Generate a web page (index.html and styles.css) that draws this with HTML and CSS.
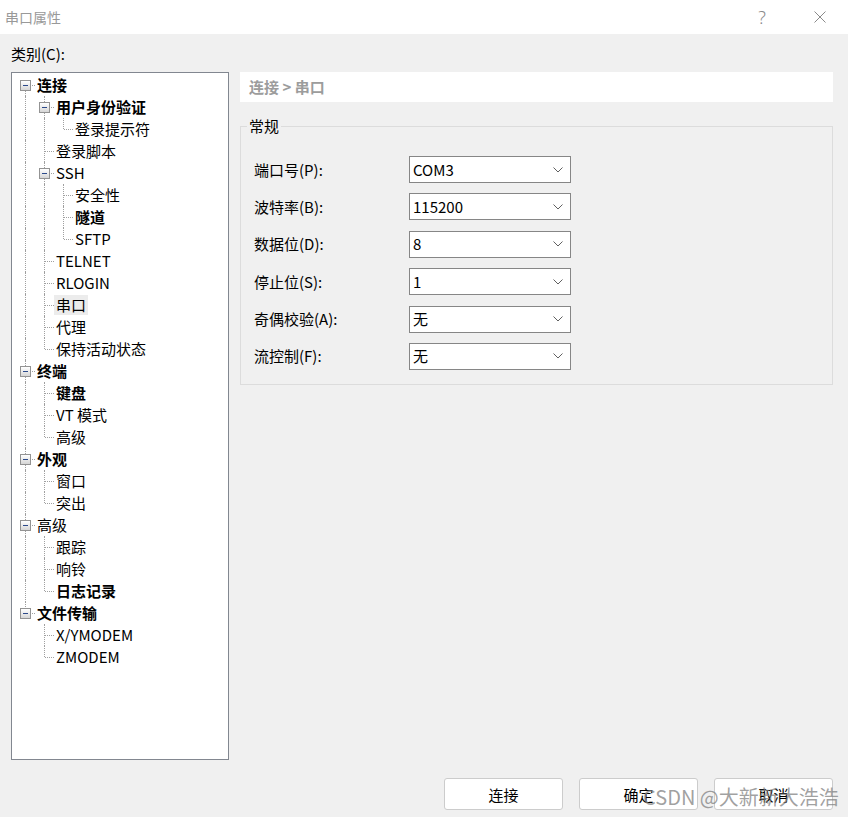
FILE: index.html
```html
<!DOCTYPE html>
<html lang="zh-CN">
<head>
<meta charset="utf-8">
<title>串口属性</title>
<link rel="stylesheet" href="styles.css">
</head>
<body>
<div class="titlebar">
  <span class="title">串口属性</span>
  <span class="tb-btn help">?</span>
  <span class="tb-btn close">
    <svg width="12" height="12" viewBox="0 0 12 12"><path d="M0.5 0.5 L11.5 11.5 M11.5 0.5 L0.5 11.5" stroke="#8a8a8a" stroke-width="1" fill="none"/></svg>
  </span>
</div>

<div class="main">
  <div class="cat-label">类别(C):</div>
  <div class="content">
    <div class="tree">
      <div class="row"><span class="g f"><i class="box"></i></span><span class="lbl b">连接</span></div>
      <div class="row"><span class="g v"></span><span class="g t"><i class="box"></i></span><span class="lbl b">用户身份验证</span></div>
      <div class="row"><span class="g v"></span><span class="g v"></span><span class="g l"></span><span class="lbl">登录提示符</span></div>
      <div class="row"><span class="g v"></span><span class="g t"></span><span class="lbl">登录脚本</span></div>
      <div class="row"><span class="g v"></span><span class="g t"><i class="box"></i></span><span class="lbl">SSH</span></div>
      <div class="row"><span class="g v"></span><span class="g v"></span><span class="g t"></span><span class="lbl">安全性</span></div>
      <div class="row"><span class="g v"></span><span class="g v"></span><span class="g t"></span><span class="lbl b">隧道</span></div>
      <div class="row"><span class="g v"></span><span class="g v"></span><span class="g l"></span><span class="lbl">SFTP</span></div>
      <div class="row"><span class="g v"></span><span class="g t"></span><span class="lbl">TELNET</span></div>
      <div class="row"><span class="g v"></span><span class="g t"></span><span class="lbl">RLOGIN</span></div>
      <div class="row"><span class="g v"></span><span class="g t"></span><span class="lbl sel">串口</span></div>
      <div class="row"><span class="g v"></span><span class="g t"></span><span class="lbl">代理</span></div>
      <div class="row"><span class="g v"></span><span class="g l"></span><span class="lbl">保持活动状态</span></div>
      <div class="row"><span class="g t"><i class="box"></i></span><span class="lbl b">终端</span></div>
      <div class="row"><span class="g v"></span><span class="g t"></span><span class="lbl b">键盘</span></div>
      <div class="row"><span class="g v"></span><span class="g t"></span><span class="lbl">VT 模式</span></div>
      <div class="row"><span class="g v"></span><span class="g l"></span><span class="lbl">高级</span></div>
      <div class="row"><span class="g t"><i class="box"></i></span><span class="lbl b">外观</span></div>
      <div class="row"><span class="g v"></span><span class="g t"></span><span class="lbl">窗口</span></div>
      <div class="row"><span class="g v"></span><span class="g l"></span><span class="lbl">突出</span></div>
      <div class="row"><span class="g t"><i class="box"></i></span><span class="lbl">高级</span></div>
      <div class="row"><span class="g v"></span><span class="g t"></span><span class="lbl">跟踪</span></div>
      <div class="row"><span class="g v"></span><span class="g t"></span><span class="lbl">响铃</span></div>
      <div class="row"><span class="g v"></span><span class="g l"></span><span class="lbl b">日志记录</span></div>
      <div class="row"><span class="g l"><i class="box"></i></span><span class="lbl b">文件传输</span></div>
      <div class="row"><span class="g"></span><span class="g t"></span><span class="lbl">X/YMODEM</span></div>
      <div class="row"><span class="g"></span><span class="g l"></span><span class="lbl">ZMODEM</span></div>
    </div>

    <div class="panel">
      <div class="crumb">连接 &gt; 串口</div>
      <fieldset class="group">
        <legend>常规</legend>
        <div class="form">
          <label class="flabel">端口号(P):</label>
          <div class="combo"><span>COM3</span><svg class="chev" width="10" height="6" viewBox="0 0 10 6"><polyline points="0.5,0.5 5,5 9.5,0.5" fill="none" stroke="#606060" stroke-width="1"/></svg></div>
          <label class="flabel">波特率(B):</label>
          <div class="combo"><span>115200</span><svg class="chev" width="10" height="6" viewBox="0 0 10 6"><polyline points="0.5,0.5 5,5 9.5,0.5" fill="none" stroke="#606060" stroke-width="1"/></svg></div>
          <label class="flabel">数据位(D):</label>
          <div class="combo"><span>8</span><svg class="chev" width="10" height="6" viewBox="0 0 10 6"><polyline points="0.5,0.5 5,5 9.5,0.5" fill="none" stroke="#606060" stroke-width="1"/></svg></div>
          <label class="flabel">停止位(S):</label>
          <div class="combo"><span>1</span><svg class="chev" width="10" height="6" viewBox="0 0 10 6"><polyline points="0.5,0.5 5,5 9.5,0.5" fill="none" stroke="#606060" stroke-width="1"/></svg></div>
          <label class="flabel">奇偶校验(A):</label>
          <div class="combo"><span>无</span><svg class="chev" width="10" height="6" viewBox="0 0 10 6"><polyline points="0.5,0.5 5,5 9.5,0.5" fill="none" stroke="#606060" stroke-width="1"/></svg></div>
          <label class="flabel">流控制(F):</label>
          <div class="combo"><span>无</span><svg class="chev" width="10" height="6" viewBox="0 0 10 6"><polyline points="0.5,0.5 5,5 9.5,0.5" fill="none" stroke="#606060" stroke-width="1"/></svg></div>
        </div>
      </fieldset>
    </div>
  </div>

  <div class="footer">
    <button class="btn">连接</button>
    <button class="btn">确定</button>
    <button class="btn">取消</button>
  </div>
</div>
<div class="watermark">CSDN @大新新大浩浩</div>
</body>
</html>
```

FILE: styles.css
```css
* { box-sizing: border-box; }
html, body { margin: 0; padding: 0; }
body {
  width: 848px;
  height: 817px;
  background: #f0f0f0;
  font-family: "Noto Sans CJK SC", "Noto Sans", sans-serif;
  font-size: 15px;
  color: #000;
  position: relative;
  overflow: hidden;
}

.titlebar {
  height: 34px;
  background: #fff;
  display: flex;
  align-items: center;
  padding-right: 5px;
}
.title {
  padding-left: 5px;
  font-size: 14px;
  color: #999;
  line-height: 20px;
  margin-right: auto;
}
.tb-btn {
  width: 46px;
  height: 30px;
  display: flex;
  align-items: center;
  justify-content: center;
}
.help {
  margin-right: 12px;
  font-family: "Noto Sans", sans-serif;
  font-weight: 300;
  font-size: 18px;
  color: #8a8a8a;
}

.main {
  padding: 0 15px 0 11px;
}
.cat-label {
  height: 38px;
  padding-top: 9px;
  line-height: 22px;
}
.content {
  display: flex;
  gap: 11px;
}

.tree {
  width: 218px;
  height: 688px;
  background: #fff;
  border: 1px solid #828790;
  padding: 1px 0 0 4px;
}
.row {
  display: flex;
  align-items: center;
  height: 22px;
}
.g {
  position: relative;
  width: 19px;
  height: 22px;
  flex: none;
}
.g.v::before, .g.t::before, .g.l::before, .g.f::before {
  content: "";
  position: absolute;
  left: 9px;
  border-left: 1px dotted #a0a0a0;
}
.g.v::before, .g.t::before { top: 0; bottom: 0; }
.g.l::before { top: 0; height: 11px; }
.g.f::before { top: 11px; bottom: 0; }
.g.t::after, .g.l::after, .g.f::after {
  content: "";
  position: absolute;
  left: 10px;
  width: 9px;
  top: 11px;
  border-top: 1px dotted #a0a0a0;
}
.box {
  position: absolute;
  left: 4px;
  top: 6px;
  width: 11px;
  height: 11px;
  border: 1px solid #939393;
  background: linear-gradient(#ffffff, #d6d6d6);
  z-index: 1;
}
.box::after {
  content: "";
  position: absolute;
  left: 2px;
  top: 4px;
  width: 5px;
  height: 1px;
  background: #2c4a8a;
}
.lbl {
  padding: 0 2px;
  line-height: 20px;
  white-space: nowrap;
}
.lbl.b { font-weight: 700; }
.lbl.sel { background: #ececec; }

.panel {
  width: 593px;
}
.crumb {
  height: 30px;
  background: #fff;
  padding-left: 9px;
  line-height: 30px;
  color: #9c9c9c;
  font-weight: 700;
}
.group {
  margin: 13px 0 0 0;
  padding: 0 13px 14px 13px;
  border: 1px solid #dcdcdc;
  min-width: 0;
}
.group legend {
  padding: 0 2px;
  margin-left: -7px;
  line-height: 22px;
}
.form {
  padding-top: 19px;
  display: grid;
  grid-template-columns: 155px 162px;
  grid-auto-rows: 27px;
  row-gap: 10.4px;
  align-items: center;
}
.flabel {
  line-height: 20px;
}
.combo {
  height: 27px;
  background: #fff;
  border: 1px solid #868686;
  display: flex;
  align-items: center;
  padding: 0 7px 0 3px;
  line-height: 20px;
}
.combo span { margin-right: auto; }
.chev { display: block; }

.footer {
  margin-top: 18px;
  display: flex;
  justify-content: flex-end;
  gap: 16px;
}
.btn {
  width: 119px;
  height: 32px;
  background: #fff;
  border: 1px solid #cccccc;
  border-radius: 3px;
  font-family: "Noto Sans CJK SC", "Noto Sans", sans-serif;
  font-size: 15px;
  color: #000;
  padding: 0;
}

.watermark {
  position: absolute;
  left: 643px;
  top: 783px;
  font-size: 20px;
  line-height: 28px;
  color: rgba(130, 130, 130, 0.75);
  white-space: nowrap;
  font-family: "Noto Sans CJK SC", "Noto Sans", sans-serif;
}
```
